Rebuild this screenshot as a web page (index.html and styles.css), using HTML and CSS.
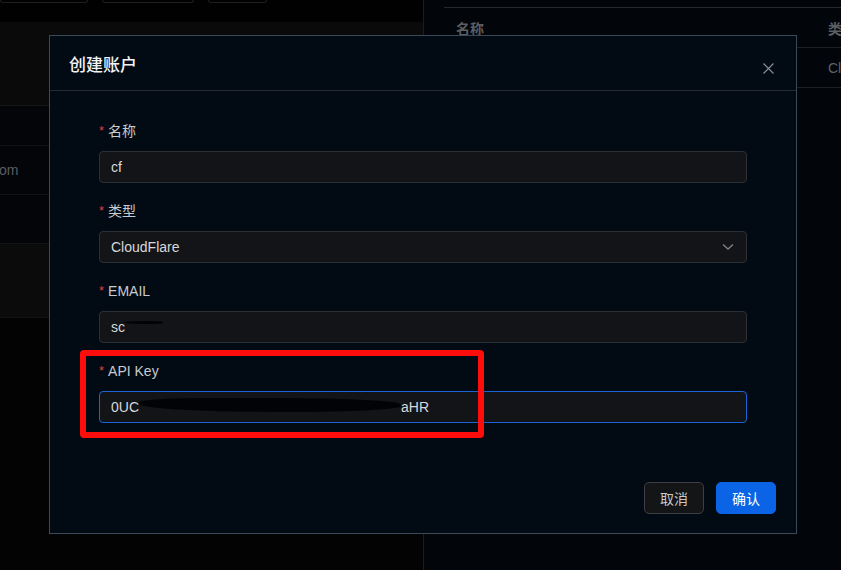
FILE: index.html
```html
<!DOCTYPE html>
<html lang="zh-CN">
<head>
    <meta charset="UTF-8">
    <title>创建账户</title>
    <link rel="stylesheet" href="styles.css">
</head>
<body>
    <div class="app">
        <div class="left">
            <div class="toolbar">
                <span class="pill pill-a"></span>
                <span class="pill pill-b"></span>
                <span class="pill pill-c"></span>
            </div>
            <div class="band"></div>
            <div class="row row-a"></div>
            <div class="row row-b"><span class="cut">om</span></div>
            <div class="row row-c"></div>
            <div class="row row-d"></div>
            <div class="rest"></div>
        </div>
        <div class="right">
            <div class="table">
                <div class="tr th">
                    <div class="td col-name">名称</div>
                    <div class="td col-type">类型</div>
                </div>
                <div class="tr">
                    <div class="td col-name"></div>
                    <div class="td col-type dim">CloudFlare</div>
                </div>
            </div>
        </div>
    </div>

    <div class="modal">
        <div class="modal-header">
            <div class="modal-title">创建账户</div>
            <span class="modal-close">
                <svg width="11" height="11" viewBox="0 0 11 11"><path d="M0.5 0.5 L10.5 10.5 M10.5 0.5 L0.5 10.5" stroke="#8b9096" stroke-width="1.1" fill="none"/></svg>
            </span>
        </div>
        <div class="modal-body">
            <div class="field">
                <label class="label"><span class="req">*</span>名称</label>
                <div class="input">cf</div>
            </div>
            <div class="field">
                <label class="label"><span class="req">*</span>类型</label>
                <div class="input select">
                    <span>CloudFlare</span>
                    <svg width="12" height="8" viewBox="0 0 12 8"><path d="M1 1.5 L6 6 L11 1.5" stroke="#7d8186" stroke-width="1.4" fill="none"/></svg>
                </div>
            </div>
            <div class="field">
                <label class="label"><span class="req">*</span>EMAIL</label>
                <div class="input">sc<span class="scribble thin"></span></div>
            </div>
            <div class="field">
                <label class="label"><span class="req">*</span>API Key</label>
                <div class="input focus">0UC<span class="scribble wide"></span>aHR</div>
            </div>
        </div>
        <div class="modal-footer">
            <button class="btn">取消</button>
            <button class="btn primary">确认</button>
        </div>
    </div>

    <div class="mark"></div>
</body>
</html>
```

FILE: styles.css
```css
body {
    margin: 0;
    width: 841px;
    height: 570px;
    overflow: hidden;
    background-color: #000;
    font-family: "Liberation Sans", "Noto Sans CJK SC", sans-serif;
    font-size: 14px;
    position: relative;
}

.app {
    display: flex;
    height: 570px;
}

.left {
    width: 423px;
    flex-shrink: 0;
    display: flex;
    flex-direction: column;
}

.toolbar {
    height: 22px;
    background-color: #010101;
    display: flex;
    gap: 14px;
}

.pill {
    display: block;
    height: 2px;
    border: 1px solid #1e1e1e;
    border-top: none;
    border-radius: 0 0 4px 4px;
}

.pill-a { width: 86px; }
.pill-b { width: 90px; }
.pill-c { width: 57px; }

.band {
    height: 83px;
    background-color: #0a0a0a;
    border-bottom: 1px solid #161616;
}

.row {
    border-bottom: 1px solid #121314;
    background-color: #040508;
    display: flex;
    align-items: center;
}

.row-a { height: 39px; }
.row-b { height: 48px; }
.row-c { height: 48px; }
.row-d { height: 73px; background-color: #0a0b0a; }

.cut {
    color: #5a5d62;
    font-size: 14px;
    margin-left: -1px;
}

.rest {
    flex: 1;
    background-color: #030303;
}

.right {
    flex: 1;
    min-width: 0;
    overflow: hidden;
    border-left: 1px solid #1a1c1f;
    background-color: #02050a;
    padding: 7px 0 0 20px;
}

.table {
    border-top: 1px solid #25282c;
}

.tr {
    display: flex;
    height: 39px;
    border-bottom: 1px solid #1c1f23;
    align-items: center;
}

.td {
    padding-left: 12px;
    white-space: nowrap;
    flex-shrink: 0;
}

.col-name { width: 360px; }

.th .td {
    color: #5b5e63;
    font-weight: bold;
}

.dim { color: #5f6368; }

/* modal */
.modal {
    position: absolute;
    left: 49px;
    top: 35px;
    width: 748px;
    height: 499px;
    box-sizing: border-box;
    border: 1px solid #3a4858;
    background-color: #020a13;
    display: flex;
    flex-direction: column;
}

.modal-header {
    height: 54px;
    border-bottom: 1px solid #262b31;
    display: flex;
    align-items: center;
    justify-content: space-between;
    padding: 0 22px 0 19px;
}

.modal-title {
    color: #f2f3f5;
    font-size: 17px;
    font-weight: 500;
}

.modal-close {
    display: flex;
    margin-top: 10px;
}

.modal-body {
    flex: 1;
    padding: 29px 49px 0;
}

.field {
    margin-bottom: 17px;
}

.label {
    display: block;
    height: 22px;
    line-height: 22px;
    color: #c8cbcf;
    margin-bottom: 9px;
}

.req {
    color: #d9434a;
    font-size: 13px;
    margin: 0 4px 0 0;
    position: relative;
    top: -1px;
}

.input {
    height: 32px;
    box-sizing: border-box;
    border: 1px solid #2c3035;
    border-radius: 4px;
    background-color: #121417;
    color: #d6d8db;
    padding: 0 11px;
    display: flex;
    align-items: center;
    white-space: nowrap;
}

.input.focus {
    border-color: #1a64d6;
}

.select {
    justify-content: space-between;
    padding-right: 12px;
}

.scribble {
    display: inline-block;
    background-color: #020306;
    filter: blur(0.6px);
}

.scribble.thin {
    width: 40px;
    height: 3px;
    margin: -10px 0 0 -2px;
    border-radius: 60% 40% 40% 60%;
}

.scribble.wide {
    width: 262px;
    height: 14px;
    margin-top: -5px;
    border-radius: 30% 50% 45% 60%;
}

.modal-footer {
    display: flex;
    justify-content: flex-end;
    gap: 12px;
    padding: 0 20px 19px;
}

.btn {
    width: 60px;
    height: 32px;
    border-radius: 5px;
    border: 1px solid #3d3f42;
    background-color: #141517;
    color: #c7c9cc;
    font-family: inherit;
    font-size: 14px;
    padding: 0;
}

.btn.primary {
    border-color: #0b63e5;
    background-color: #0b63e5;
    color: #fff;
}

/* red annotation box over the API Key field */
.mark {
    position: absolute;
    left: 80px;
    top: 350px;
    width: 392px;
    height: 76px;
    border: 6px solid #ff0d0d;
    border-radius: 4px;
}
```
